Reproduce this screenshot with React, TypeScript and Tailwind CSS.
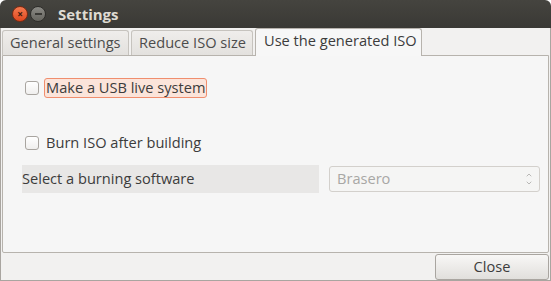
import { ChevronUp, ChevronDown } from 'lucide-react';

const FONT = { fontFamily: '"Open Sans", "DejaVu Sans", sans-serif' };

function Checkbox() {
  return (
    <span className="block size-[14px] shrink-0 rounded-[3px] border border-[#a9a5a0] bg-gradient-to-b from-[#ffffff] to-[#f0efee]" />
  );
}

export default function App() {
  return (
    <div className="flex h-[281px] w-[551px] flex-col overflow-hidden text-[14.6px] text-[#3c3c3c]" style={FONT}>
      {/* title bar */}
      <div className="flex h-[28px] shrink-0 items-center rounded-t-[6px] bg-gradient-to-b from-[#45443f] to-[#3a3935] pl-[12px]">
        <span className="flex size-[16px] items-center justify-center rounded-full border border-[#7d2a12] bg-gradient-to-b from-[#f57a4f] to-[#e0471d] text-[10px] font-bold leading-none text-[#3c1a0c]">
          ×
        </span>
        <span className="ml-[2px] flex size-[16px] items-center justify-center rounded-full border border-[#2e2d2a] bg-gradient-to-b from-[#8b8a85] to-[#66655f]">
          <span className="block h-[2px] w-[7px] bg-[#3a3935]" />
        </span>
        <span className="ml-[12px] text-[15px] font-bold text-[#dfdbd2]">Settings</span>
      </div>

      {/* window body */}
      <div className="flex flex-1 flex-col border-x border-b border-[#a9a5a0] bg-[#f2f1f0]">
        {/* tabs */}
        <div className="flex h-[27px] shrink-0 items-end pl-[1px]">
          <div className="flex h-[25px] w-[127px] items-center rounded-t-[3px] border border-b-0 border-[#c6c3be] bg-gradient-to-b from-[#efedeb] to-[#e3e1de] pl-[7px] text-[#4c4c4c]">
            General settings
          </div>
          <div className="ml-[2px] flex h-[25px] w-[122px] items-center rounded-t-[3px] border border-b-0 border-[#c6c3be] bg-gradient-to-b from-[#efedeb] to-[#e3e1de] pl-[7px] text-[#4c4c4c]">
            Reduce ISO size
          </div>
          <div className="relative z-10 -mb-px ml-[2px] flex h-[28px] w-[167px] items-center rounded-t-[3px] border border-b-0 border-[#b7b3ad] bg-[#f7f7f7] pb-[3px] pl-[8px]">
            Use the generated ISO
          </div>
        </div>

        {/* page */}
        <div className="mx-[1px] flex h-[198px] shrink-0 flex-col rounded-b-[2px] border border-[#b7b3ad] bg-[#f6f6f6] pl-[19px] pr-[8px]">
          <div className="mt-[22px] flex items-center">
            <span className="ml-[3px]">
              <Checkbox />
            </span>
            <span className="ml-[5px] flex h-[20px] items-center rounded-[3px] border border-[#f08e6e] bg-[#fbe4da] px-[1px]">
              Make a USB live system
            </span>
          </div>
          <div className="mt-[34px] flex items-center">
            <span className="ml-[3px]">
              <Checkbox />
            </span>
            <span className="ml-[7px]">Burn ISO after building</span>
          </div>
          <div className="mt-[11px] flex h-[28px] items-center">
            <div className="flex h-full w-[297px] items-center bg-[#e8e7e6]">Select a burning software</div>
            <div className="ml-[10px] flex h-[26px] flex-1 items-center justify-between rounded-[3px] border border-[#d3d0cc] bg-[#f5f5f4] pl-[7px] pr-[6px] text-[#a8a7a5]">
              Brasero
              <span className="flex flex-col text-[#b9b8b6]">
                <ChevronUp size={8} strokeWidth={3} />
                <ChevronDown size={8} strokeWidth={3} />
              </span>
            </div>
          </div>
        </div>

        {/* action area */}
        <div className="flex flex-1 items-center justify-end pr-[1px]">
          <button className="h-[26px] w-[114px] rounded-[3px] border border-[#a9a5a0] bg-gradient-to-b from-[#f8f7f6] to-[#e1dfdc] text-[14.6px] text-[#3c3c3c]">
            Close
          </button>
        </div>
      </div>
    </div>
  );
}
